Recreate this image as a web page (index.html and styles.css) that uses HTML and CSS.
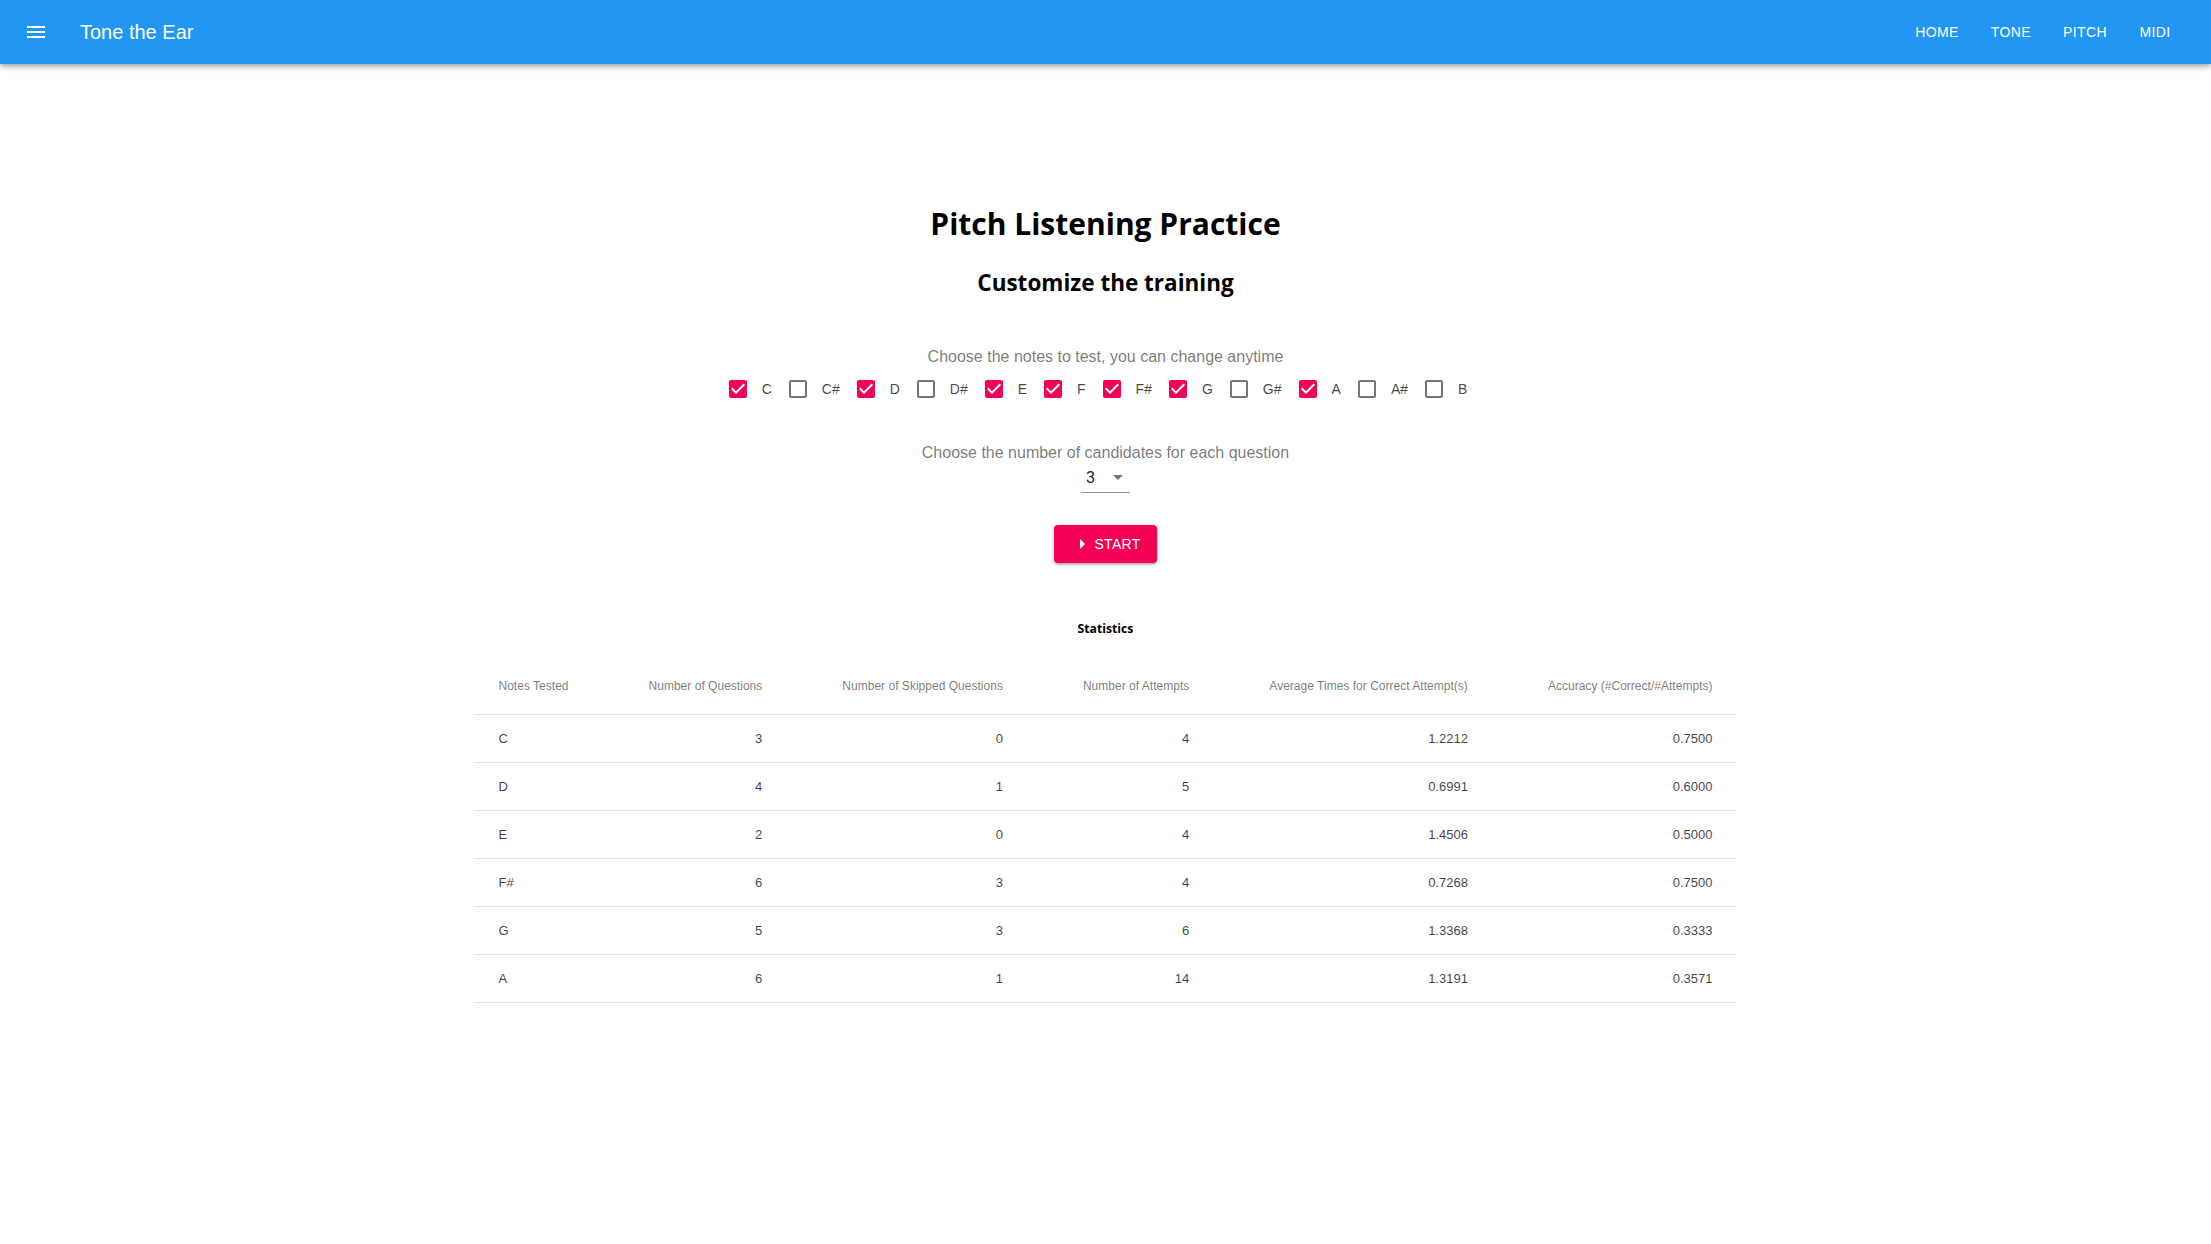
FILE: index.html
```html
<!DOCTYPE html>
<html lang="en">
<head>
<meta charset="utf-8">
<title>Tone the Ear</title>
<link rel="stylesheet" href="styles.css">
</head>
<body>
<header class="appbar">
  <button class="menu-btn" aria-label="menu">
    <svg viewBox="0 0 24 24" width="24" height="24"><path d="M3 18h18v-2H3v2zm0-5h18v-2H3v2zm0-7v2h18V6H3z"/></svg>
  </button>
  <div class="brand">Tone the Ear</div>
  <nav class="nav">
    <a class="nav-btn">HOME</a>
    <a class="nav-btn">TONE</a>
    <a class="nav-btn">PITCH</a>
    <a class="nav-btn">MIDI</a>
  </nav>
</header>

<main class="content">
  <h1 class="title">Pitch Listening Practice</h1>
  <h2 class="subtitle">Customize the training</h2>

  <p class="hint hint-notes">Choose the notes to test, you can change anytime</p>
  <div class="notes">
    <label class="note"><span class="cb on"><svg viewBox="0 0 24 24"><path d="M19 3H5c-1.11 0-2 .9-2 2v14c0 1.1.89 2 2 2h14c1.11 0 2-.9 2-2V5c0-1.1-.89-2-2-2zm-9 14l-5-5 1.41-1.41L10 14.17l7.59-7.59L19 8l-9 9z"/></svg></span><span class="note-label">C</span></label>
    <label class="note"><span class="cb"><svg viewBox="0 0 24 24"><path d="M19 5v14H5V5h14m0-2H5c-1.1 0-2 .9-2 2v14c0 1.1.9 2 2 2h14c1.1 0 2-.9 2-2V5c0-1.1-.9-2-2-2z"/></svg></span><span class="note-label">C#</span></label>
    <label class="note"><span class="cb on"><svg viewBox="0 0 24 24"><path d="M19 3H5c-1.11 0-2 .9-2 2v14c0 1.1.89 2 2 2h14c1.11 0 2-.9 2-2V5c0-1.1-.89-2-2-2zm-9 14l-5-5 1.41-1.41L10 14.17l7.59-7.59L19 8l-9 9z"/></svg></span><span class="note-label">D</span></label>
    <label class="note"><span class="cb"><svg viewBox="0 0 24 24"><path d="M19 5v14H5V5h14m0-2H5c-1.1 0-2 .9-2 2v14c0 1.1.9 2 2 2h14c1.1 0 2-.9 2-2V5c0-1.1-.9-2-2-2z"/></svg></span><span class="note-label">D#</span></label>
    <label class="note"><span class="cb on"><svg viewBox="0 0 24 24"><path d="M19 3H5c-1.11 0-2 .9-2 2v14c0 1.1.89 2 2 2h14c1.11 0 2-.9 2-2V5c0-1.1-.89-2-2-2zm-9 14l-5-5 1.41-1.41L10 14.17l7.59-7.59L19 8l-9 9z"/></svg></span><span class="note-label">E</span></label>
    <label class="note"><span class="cb on"><svg viewBox="0 0 24 24"><path d="M19 3H5c-1.11 0-2 .9-2 2v14c0 1.1.89 2 2 2h14c1.11 0 2-.9 2-2V5c0-1.1-.89-2-2-2zm-9 14l-5-5 1.41-1.41L10 14.17l7.59-7.59L19 8l-9 9z"/></svg></span><span class="note-label">F</span></label>
    <label class="note"><span class="cb on"><svg viewBox="0 0 24 24"><path d="M19 3H5c-1.11 0-2 .9-2 2v14c0 1.1.89 2 2 2h14c1.11 0 2-.9 2-2V5c0-1.1-.89-2-2-2zm-9 14l-5-5 1.41-1.41L10 14.17l7.59-7.59L19 8l-9 9z"/></svg></span><span class="note-label">F#</span></label>
    <label class="note"><span class="cb on"><svg viewBox="0 0 24 24"><path d="M19 3H5c-1.11 0-2 .9-2 2v14c0 1.1.89 2 2 2h14c1.11 0 2-.9 2-2V5c0-1.1-.89-2-2-2zm-9 14l-5-5 1.41-1.41L10 14.17l7.59-7.59L19 8l-9 9z"/></svg></span><span class="note-label">G</span></label>
    <label class="note"><span class="cb"><svg viewBox="0 0 24 24"><path d="M19 5v14H5V5h14m0-2H5c-1.1 0-2 .9-2 2v14c0 1.1.9 2 2 2h14c1.1 0 2-.9 2-2V5c0-1.1-.9-2-2-2z"/></svg></span><span class="note-label">G#</span></label>
    <label class="note"><span class="cb on"><svg viewBox="0 0 24 24"><path d="M19 3H5c-1.11 0-2 .9-2 2v14c0 1.1.89 2 2 2h14c1.11 0 2-.9 2-2V5c0-1.1-.89-2-2-2zm-9 14l-5-5 1.41-1.41L10 14.17l7.59-7.59L19 8l-9 9z"/></svg></span><span class="note-label">A</span></label>
    <label class="note"><span class="cb"><svg viewBox="0 0 24 24"><path d="M19 5v14H5V5h14m0-2H5c-1.1 0-2 .9-2 2v14c0 1.1.9 2 2 2h14c1.1 0 2-.9 2-2V5c0-1.1-.9-2-2-2z"/></svg></span><span class="note-label">A#</span></label>
    <label class="note"><span class="cb"><svg viewBox="0 0 24 24"><path d="M19 5v14H5V5h14m0-2H5c-1.1 0-2 .9-2 2v14c0 1.1.9 2 2 2h14c1.1 0 2-.9 2-2V5c0-1.1-.9-2-2-2z"/></svg></span><span class="note-label">B</span></label>
  </div>

  <p class="hint hint-cands">Choose the number of candidates for each question</p>
  <div class="select">
    <span class="select-value">3</span>
    <svg class="select-arrow" viewBox="0 0 24 24"><path d="M7 10l5 5 5-5z"/></svg>
  </div>

  <button class="start">
    <svg viewBox="0 0 24 24"><path d="M10 17l5-5-5-5v10z"/></svg>
    <span>START</span>
  </button>

  <h5 class="stats-title">Statistics</h5>
  <table class="stats">
    <thead>
      <tr>
        <th>Notes Tested</th>
        <th>Number of Questions</th>
        <th>Number of Skipped Questions</th>
        <th>Number of Attempts</th>
        <th>Average Times for Correct Attempt(s)</th>
        <th>Accuracy (#Correct/#Attempts)</th>
      </tr>
    </thead>
    <tbody>
      <tr><td>C</td><td>3</td><td>0</td><td>4</td><td>1.2212</td><td>0.7500</td></tr>
      <tr><td>D</td><td>4</td><td>1</td><td>5</td><td>0.6991</td><td>0.6000</td></tr>
      <tr><td>E</td><td>2</td><td>0</td><td>4</td><td>1.4506</td><td>0.5000</td></tr>
      <tr><td>F#</td><td>6</td><td>3</td><td>4</td><td>0.7268</td><td>0.7500</td></tr>
      <tr><td>G</td><td>5</td><td>3</td><td>6</td><td>1.3368</td><td>0.3333</td></tr>
      <tr><td>A</td><td>6</td><td>1</td><td>14</td><td>1.3191</td><td>0.3571</td></tr>
    </tbody>
  </table>
</main>
</body>
</html>
```

FILE: styles.css
```css
html, body {
  margin: 0;
  padding: 0;
  background: #ffffff;
}

body {
  font-family: "Liberation Sans", Arial, Helvetica, sans-serif;
  color: rgba(0, 0, 0, 0.87);
}

/* ---------- App bar ---------- */
.appbar {
  position: relative;
  z-index: 2;
  display: flex;
  align-items: center;
  height: 64px;
  padding: 0 24px;
  background: #2196f3;
  color: #ffffff;
  box-shadow: 0 2px 4px -1px rgba(0, 0, 0, 0.2),
              0 4px 5px 0 rgba(0, 0, 0, 0.14),
              0 1px 10px 0 rgba(0, 0, 0, 0.12);
}

.menu-btn {
  display: flex;
  align-items: center;
  justify-content: center;
  width: 48px;
  height: 48px;
  margin: 0 20px 0 -12px;
  padding: 0;
  border: 0;
  background: none;
  color: #ffffff;
}

.menu-btn svg {
  fill: currentColor;
}

.brand {
  flex: 1;
  font-size: 20px;
  line-height: 27px;
}

.nav {
  display: flex;
}

.nav-btn {
  display: flex;
  align-items: center;
  justify-content: center;
  box-sizing: border-box;
  min-width: 64px;
  height: 36px;
  padding: 0 16px;
  font-size: 14px;
  letter-spacing: 0.4px;
  color: #ffffff;
  text-decoration: none;
}

/* ---------- Content ---------- */
.content {
  display: flex;
  flex-direction: column;
  align-items: center;
  padding-top: 139.5px;
  padding-bottom: 60px;
}

.title {
  margin: 0;
  font-family: "Open Sans", "Noto Sans", sans-serif;
  font-weight: 700;
  font-size: 30px;
  line-height: 40px;
  color: #000000;
}

.subtitle {
  margin: 23px 0 0;
  font-family: "Open Sans", "Noto Sans", sans-serif;
  font-weight: 700;
  font-size: 22.5px;
  line-height: 32px;
  color: #000000;
}

.hint {
  margin: 48.5px 0 0;
  font-size: 16px;
  line-height: 19px;
  color: rgba(0, 0, 0, 0.54);
}

.hint-cands {
  margin-top: 34px;
  line-height: 18px;
}

/* ---------- Note checkboxes ---------- */
.notes {
  display: flex;
  justify-content: center;
  align-items: center;
  height: 42px;
  margin-top: 1.5px;
}

.note {
  display: inline-flex;
  align-items: center;
  margin: 0 16px 0 -14px;
}

.cb {
  display: flex;
  align-items: center;
  justify-content: center;
  width: 48px;
  height: 42px;
}

.cb svg {
  width: 24px;
  height: 24px;
  fill: rgba(0, 0, 0, 0.54);
}

.cb.on svg {
  fill: #f50057;
}

.note-label {
  font-size: 14px;
  line-height: 20px;
  color: rgba(0, 0, 0, 0.74);
}

/* ---------- Select ---------- */
.select {
  position: relative;
  box-sizing: border-box;
  width: 49px;
  padding: 6px 0 5px 5px;
  border-bottom: 1px solid rgba(0, 0, 0, 0.42);
  font-size: 16px;
  line-height: 19px;
  color: rgba(0, 0, 0, 0.87);
}

.select-value {
  display: block;
}

.select-arrow {
  position: absolute;
  right: 0;
  top: calc(50% - 12px);
  width: 24px;
  height: 24px;
  fill: rgba(0, 0, 0, 0.54);
}

/* ---------- Start button ---------- */
.start {
  display: inline-flex;
  align-items: center;
  height: 38px;
  margin-top: 32px;
  padding: 0 16px;
  border: 0;
  border-radius: 4px;
  background: #f50057;
  color: #ffffff;
  font-family: "Liberation Sans", Arial, sans-serif;
  font-size: 14px;
  letter-spacing: 0.3px;
  box-shadow: 0 1px 5px 0 rgba(0, 0, 0, 0.2),
              0 2px 2px 0 rgba(0, 0, 0, 0.14),
              0 3px 1px -2px rgba(0, 0, 0, 0.12);
}

.start svg {
  width: 24px;
  height: 24px;
  fill: #ffffff;
}

/* ---------- Statistics ---------- */
.stats-title {
  margin: 56px 0 0;
  font-family: "Open Sans", "Noto Sans", sans-serif;
  font-weight: 700;
  font-size: 12.2px;
  line-height: 20px;
  color: #000000;
}

.stats {
  margin-top: 20px;
  border-collapse: collapse;
  border-spacing: 0;
}

.stats th,
.stats td {
  padding: 4px 56px 4px 24px;
  border-bottom: 1px solid rgb(224, 224, 224);
  white-space: nowrap;
  text-align: right;
  vertical-align: middle;
}

.stats th:first-child,
.stats td:first-child {
  text-align: left;
}

.stats th:last-child,
.stats td:last-child {
  padding-right: 24px;
}

.stats thead tr {
  height: 56px;
}

.stats tbody tr {
  height: 48px;
}

.stats th {
  font-size: 12px;
  font-weight: 400;
  letter-spacing: 0.02px;
  color: rgba(0, 0, 0, 0.54);
}

.stats td {
  font-size: 13px;
  color: rgba(0, 0, 0, 0.76);
}
```
